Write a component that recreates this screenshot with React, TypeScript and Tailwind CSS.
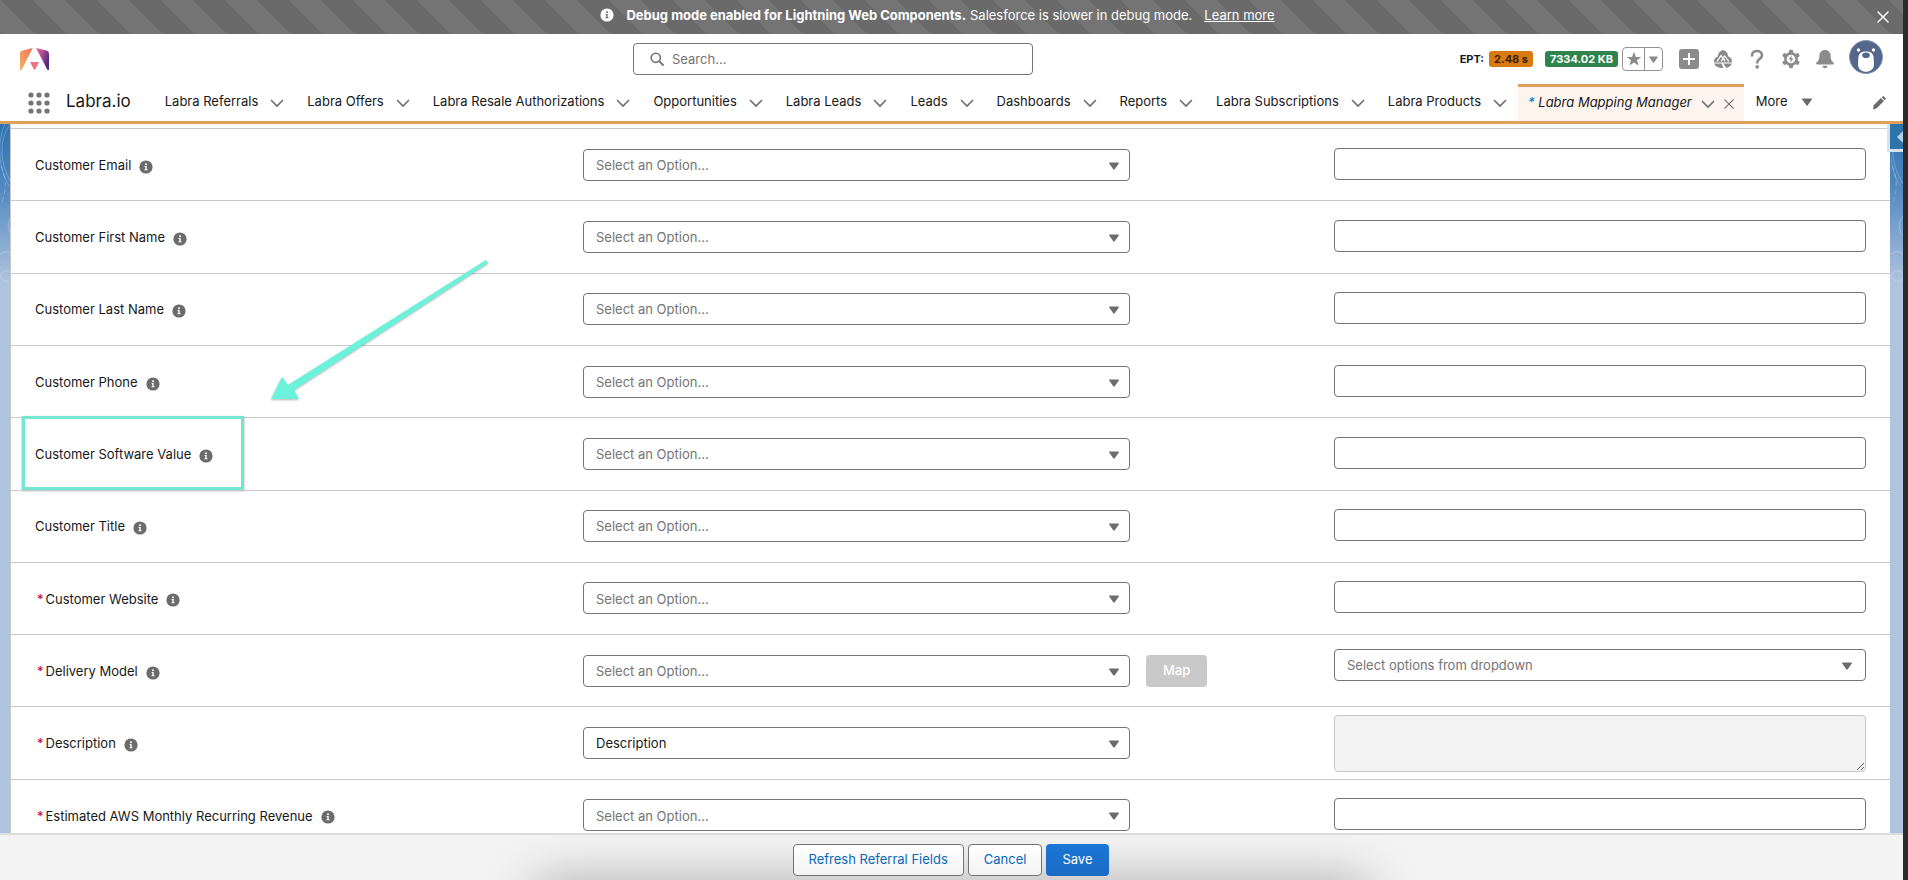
import { useState } from "react";
import type { ReactNode } from "react";

type Field = {
  label: string;
  required?: boolean;
  value?: string;
  mappable?: boolean;
  target?: "text" | "select" | "textarea";
};

const tabs = [
  "Labra Referrals",
  "Labra Offers",
  "Labra Resale Authorizations",
  "Opportunities",
  "Labra Leads",
  "Leads",
  "Dashboards",
  "Reports",
  "Labra Subscriptions",
  "Labra Products",
];

const fields: Field[] = [
  { label: "Customer Email" },
  { label: "Customer First Name" },
  { label: "Customer Last Name" },
  { label: "Customer Phone" },
  { label: "Customer Software Value" },
  { label: "Customer Title" },
  { label: "Customer Website", required: true },
  { label: "Delivery Model", required: true, mappable: true, target: "select" },
  {
    label: "Description",
    required: true,
    value: "Description",
    target: "textarea",
  },
  { label: "Estimated AWS Monthly Recurring Revenue", required: true },
];

const ChevronIcon = () => (
  <svg viewBox="0 0 16 16" className="h-4 w-4" fill="none">
    <path
      d="M2.500 5.500 8 11.200l5.500-5.700"
      stroke="#747474"
      strokeWidth="1.7"
      strokeLinecap="round"
      strokeLinejoin="round"
    />
  </svg>
);

const CloseIcon = ({ className }: { className: string }) => (
  <svg viewBox="0 0 12 12" className={className} fill="none">
    <path
      d="M1 1l10 10M11 1l-10 10"
      stroke="currentColor"
      strokeWidth="1.5"
      strokeLinecap="round"
    />
  </svg>
);

const TriangleIcon = ({ className }: { className: string }) => (
  <svg viewBox="0 0 10 8" className={className} fill="currentColor">
    <path d="M.6.500h8.800c.5 0 .7.500.4.900L5.500 7.600c-.3.300-.7.300-1 0L.2 1.400C-.1 1 .1.500.6.500z" />
  </svg>
);

const InfoIcon = ({ className }: { className: string }) => (
  <svg viewBox="0 0 14 14" className={className}>
    <circle cx="7" cy="7" r="6.600" fill="currentColor" />
    <g className="fill-white group-data-[dark=true]:fill-[#6b6b6b]">
      <circle cx="7" cy="4.200" r="1" />
      <path d="M5.600 6h2.100v3.300h.8v.9H5.500v-.9h.8V6.900h-.7z" />
    </g>
  </svg>
);

const LogoIcon = () => (
  <svg viewBox="0 0 29 23" className="h-[23px] w-[29px]">
    <defs>
      <linearGradient id="logoLeft" x1="0" y1="1" x2="1" y2="0">
        <stop offset="0" stopColor="#f6b25c" />
        <stop offset="1" stopColor="#ea7264" />
      </linearGradient>
      <linearGradient id="logoRight" x1="0" y1="0" x2="1" y2="0.500">
        <stop offset="0" stopColor="#ee6d7c" />
        <stop offset="0.500" stopColor="#b04a90" />
        <stop offset="1" stopColor="#4b2a80" />
      </linearGradient>
    </defs>
    <path d="M0 6.200C0 4 .8 3.400 2.600 2.600L12.700 0 1.500 22H0z" fill="url(#logoLeft)" />
    <path
      d="M29 6.200c0-2.200-.8-2.800-2.600-3.600L16 0l11.500 22H29z"
      fill="url(#logoRight)"
    />
    <path d="M10 14h9l-3.800 7.400c-.3.600-1 .6-1.300 0z" fill="#ee7382" />
  </svg>
);

const TrailheadIcon = () => (
  <svg viewBox="0 0 20 20" className="h-5 w-5">
    <path
      d="M1.200 13.600A5 5 0 0 1 1.500 10C2.300 8.800 3.600 8.200 4.600 7.600 5.400 3.600 7.300 1.200 10 1.200s4.600 2.400 5.400 6.400c1 .6 2.300 1.200 3.100 2.400a5 5 0 0 1 .3 3.600z"
      fill="#8b8b8b"
    />
    <path
      d="M4 12.400 8 6.600l1.900 2.600 1.700-2.300 4.200 5.500M8.200 12.400l2.100-3.200 1.900 3.200"
      fill="none"
      stroke="#fff"
      strokeWidth="1.200"
    />
    <path d="M1 14.600h7.600l1.700 4.400c-3.600.4-7.300-.4-9.300-4.400z" fill="#8b8b8b" />
    <path d="M10.300 14.600H19c-.9 2.200-2.800 3.600-5.600 4.300z" fill="#8b8b8b" />
  </svg>
);

const GearIcon = () => (
  <svg viewBox="0 0 20 20" className="h-5 w-5">
    <g fill="#8b8b8b">
      <circle cx="10" cy="10" r="6.900" />
      <rect x="8" y="0.800" width="4" height="18.400" rx="1.200" />
      <rect
        x="8"
        y="0.800"
        width="4"
        height="18.400"
        rx="1.200"
        transform="rotate(60 10 10)"
      />
      <rect
        x="8"
        y="0.800"
        width="4"
        height="18.400"
        rx="1.200"
        transform="rotate(120 10 10)"
      />
    </g>
    <circle cx="10" cy="10" r="4.300" fill="#fff" />
    <path d="M10.800 6 7.700 10.500h2L9.200 14l3.200-4.700h-2.100z" fill="#8b8b8b" />
  </svg>
);

const BellIcon = () => (
  <svg viewBox="0 0 20 20" className="h-5 w-5" fill="#8b8b8b">
    <path d="M10 1c-3.300 0-5.600 2.500-5.600 5.700 0 3.600-.9 5.200-2.800 6.700-.9.700-.5 2.100.7 2.100h15.400c1.200 0 1.600-1.400.7-2.100-1.900-1.500-2.800-3.100-2.800-6.700C15.600 3.500 13.300 1 10 1z" />
    <path d="M7.600 16.800h4.800c0 1.400-1 2.400-2.400 2.400s-2.400-1-2.400-2.400z" />
  </svg>
);

const AvatarIcon = () => (
  <svg viewBox="0 0 34 34" className="h-[34px] w-[34px]">
    <circle cx="17" cy="17" r="16.500" fill="#52678b" stroke="#8b99b3" />
    <path
      d="M17 11.500c-4.300 0-7.400 1.600-7.600 6-.2 4.300-.6 6.300-.2 8.500.5 3.200 3.500 5.800 7.800 5.800s7.300-2.600 7.800-5.800c.4-2.200 0-4.200-.2-8.500-.2-4.400-3.300-6-7.600-6z"
      fill="#fff"
    />
    <ellipse cx="17" cy="15.200" rx="3.800" ry="2.800" fill="#52678b" />
    <circle cx="9.500" cy="10" r="1.700" fill="#fff" />
    <circle cx="24.500" cy="10" r="1.700" fill="#fff" />
  </svg>
);

const PencilIcon = () => (
  <svg viewBox="0 0 14 14" className="h-[14px] w-[14px]" fill="#6b6b6b">
    <path d="M1.700 9.300 8.900 2.100l3 3-7.200 7.200-3.700 1.200z" />
    <path d="M9.700 1.300l.8-.8c.4-.4 1-.4 1.400 0l1.600 1.600c.4.400.4 1 0 1.400l-.8.800z" />
  </svg>
);

const IconButton = ({
  label,
  children,
}: {
  label: string;
  children: ReactNode;
}) => (
  <button
    type="button"
    aria-label={label}
    className="flex w-8 items-center justify-center"
  >
    {children}
  </button>
);

const DebugBanner = ({ onClose }: { onClose: () => void }) => (
  <div className="flex h-[34px] items-center bg-[linear-gradient(45deg,#6a6a6a_25%,#747474_25%,#747474_50%,#6a6a6a_50%,#6a6a6a_75%,#747474_75%)] bg-[length:64px_64px] px-[14px] text-[13px] leading-5 text-white">
    <div
      data-dark="true"
      className="group flex flex-1 items-center justify-center pr-4 pb-1"
    >
      <InfoIcon className="mr-3 h-[14px] w-[14px]" />
      <strong className="mr-1 font-bold">
        Debug mode enabled for Lightning Web Components.
      </strong>
      <span className="mr-3">Salesforce is slower in debug mode.</span>
      <a href="#learn-more" className="underline">
        Learn more
      </a>
    </div>
    <button type="button" aria-label="Close" onClick={onClose}>
      <CloseIcon className="h-3 w-3" />
    </button>
  </div>
);

const GlobalHeader = () => (
  <header className="grid h-[50px] grid-cols-[613fr_400px_850fr] items-center bg-white px-5">
    <LogoIcon />
    <label className="flex h-8 items-center rounded border border-[#747474] bg-white pl-4">
      <svg viewBox="0 0 14 14" className="mr-2 h-[14px] w-[14px]" fill="none">
        <circle cx="5.800" cy="5.800" r="4.600" stroke="#747474" strokeWidth="1.600" />
        <path
          d="M9.200 9.200l3.800 3.800"
          stroke="#747474"
          strokeWidth="1.800"
          strokeLinecap="round"
        />
      </svg>
      <input
        type="search"
        aria-label="Search"
        placeholder="Search..."
        className="min-w-0 flex-1 pt-[2px] text-[13px] outline-none placeholder:text-[#747474]"
      />
    </label>
    <div className="flex items-center justify-end">
      <span className="mr-[5px] text-[11px] font-bold text-[#181818]">EPT:</span>
      <span className="mr-3 rounded-[3px] bg-[#d87a10] px-[5px] text-[11px] leading-4 font-bold text-[#3a1d08]">
        2.48 s
      </span>
      <span className="mr-1 rounded-[3px] bg-[#2e844a] px-[5px] text-[11px] leading-4 font-bold text-white">
        7334.02 KB
      </span>
      <div className="mr-[10px] flex h-6 w-[41px] rounded border border-[#939393] text-[#8b8b8b]">
        <button
          type="button"
          aria-label="Favorite"
          className="flex flex-1 items-center justify-center border-r border-[#939393]"
        >
          <svg viewBox="0 0 16 16" className="h-4 w-4" fill="currentColor">
            <path d="M8 .8l1.900 5.100h5.300l-4.200 3.300 1.500 5.300L8 11.400l-4.500 3.100L5 9.200.8 5.900h5.300z" />
          </svg>
        </button>
        <button
          type="button"
          aria-label="Favorites list"
          className="flex w-[17px] items-center justify-center"
        >
          <TriangleIcon className="h-[7px] w-[9px]" />
        </button>
      </div>
      <div className="mr-2 flex gap-x-[2px]">
        <IconButton label="Quick create">
          <svg viewBox="0 0 20 20" className="h-5 w-5">
            <rect width="20" height="20" rx="3" fill="#8b8b8b" />
            <path d="M10 4v12M4 10h12" stroke="#fff" strokeWidth="2" />
          </svg>
        </IconButton>
        <IconButton label="Guidance center">
          <TrailheadIcon />
        </IconButton>
        <IconButton label="Help">
          <svg viewBox="0 0 14 20" className="h-5 w-[14px]" fill="none">
            <path
              d="M2 6.400C2 3.600 4.200 2 7 2s5 1.700 5 4.400c0 3.400-4.700 3.500-4.700 7"
              stroke="#8b8b8b"
              strokeWidth="2.600"
              strokeLinecap="round"
            />
            <circle cx="7.200" cy="17.900" r="1.800" fill="#8b8b8b" />
          </svg>
        </IconButton>
        <IconButton label="Setup">
          <GearIcon />
        </IconButton>
        <IconButton label="Notifications">
          <BellIcon />
        </IconButton>
      </div>
      <button type="button" aria-label="View profile" className="pb-1">
        <AvatarIcon />
      </button>
    </div>
  </header>
);

const NavBar = () => (
  <nav className="flex h-10 items-stretch border-b-[3px] border-[#e0a05c] bg-white text-[13px] text-[#181818]">
    <button type="button" aria-label="App launcher" className="ml-7 shrink-0">
      <svg viewBox="0 0 22 22" className="h-[22px] w-[22px]" fill="#747474">
        {[3, 11, 19].map((y) =>
          [3, 11, 19].map((x) => (
            <circle key={`${x}-${y}`} cx={x} cy={y} r="2.600" />
          ))
        )}
      </svg>
    </button>
    <span className="mr-[22px] ml-4 flex items-center pb-[2px] text-[17px]">
      Labra.io
    </span>
    {tabs.map((tab) => (
      <div key={tab} className="flex items-center pr-[10px] pl-3">
        <a href="#tab" className="pb-[2px] whitespace-nowrap">
          {tab}
        </a>
        <button type="button" aria-label={`${tab} list`} className="ml-[11px]">
          <ChevronIcon />
        </button>
      </div>
    ))}
    <div className="flex items-center border-t-[3px] border-[#e0a05c] bg-[#fef4ee] pr-[10px] pl-[10px]">
      <a href="#tab" className="pb-[2px] whitespace-nowrap italic">
        <span className="text-[#0070d2]">*</span> Labra Mapping Manager
      </a>
      <button
        type="button"
        aria-label="Labra Mapping Manager actions"
        className="ml-2"
      >
        <ChevronIcon />
      </button>
      <button
        type="button"
        aria-label="Close Labra Mapping Manager"
        className="ml-2 text-[#747474]"
      >
        <CloseIcon className="h-[10px] w-[10px]" />
      </button>
    </div>
    <button type="button" className="flex items-center pb-[2px] pl-3">
      More
      <TriangleIcon className="ml-[14px] h-2 w-[10px] text-[#6b6b6b]" />
    </button>
    <button type="button" aria-label="Edit tabs" className="mr-[17px] ml-auto">
      <PencilIcon />
    </button>
  </nav>
);

const SelectBox = ({
  id,
  label,
  placeholder,
  value,
  arrowClass = "right-[11px]",
}: {
  id?: string;
  label?: string;
  placeholder: string;
  value?: string;
  arrowClass?: string;
}) => (
  <div className="relative">
    <select
      id={id}
      aria-label={label}
      defaultValue={value ?? ""}
      className={`h-8 w-full appearance-none rounded border border-[#747474] bg-white px-3 pt-[2px] text-[13px] ${
        value ? "text-[#181818]" : "text-[#747474]"
      }`}
    >
      <option value="">{placeholder}</option>
      {value && <option value={value}>{value}</option>}
    </select>
    <TriangleIcon
      className={`pointer-events-none absolute top-[13px] h-2 w-[10px] text-[#6b6b6b] ${arrowClass}`}
    />
  </div>
);

const TargetControl = ({ field }: { field: Field }) => {
  const label = `${field.label} default value`;
  if (field.target === "select") {
    return (
      <div className="pb-3">
        <SelectBox
          label={label}
          placeholder="Select options from dropdown"
          arrowClass="right-[14px]"
        />
      </div>
    );
  }
  if (field.target === "textarea") {
    return (
      <textarea
        aria-label={label}
        disabled
        className="block h-[57px] w-full rounded border border-[#c9c9c9] bg-[#f3f3f3]"
      />
    );
  }
  return (
    <div className="pb-[2px]">
      <input
        type="text"
        aria-label={label}
        className="block h-8 w-full rounded border border-[#747474] bg-white px-3 text-[13px]"
      />
    </div>
  );
};

// Teal callout drawn over the highlighted field
const Callout = () => (
  <>
    <div className="pointer-events-none absolute -top-[2px] left-[11px] h-[74px] w-[222px] border-[3px] border-[#74e6d2] shadow-[0_1px_2px_rgba(0,0,0,0.35)]" />
    <svg
      viewBox="0 0 220 145"
      className="pointer-events-none absolute -top-[160px] left-[258px] h-[145px] w-[220px] drop-shadow-[0_1px_1px_rgba(0,0,0,0.3)]"
      fill="#6af2db"
    >
      <path d="M217 2l2 3L25 132l5 9H2l11-22 6 8z" />
    </svg>
  </>
);

const FieldRow = ({ field }: { field: Field }) => {
  const id = field.label.toLowerCase().replace(/ /g, "-");

  return (
    <div className="relative grid grid-cols-[548fr_547fr_204fr_532fr] items-center border-t border-[#c9c9c9] px-6">
      <div className="flex items-center pt-[2px] text-[13px] text-[#181818]">
        {field.required && (
          <span className="mr-[2px] ml-[2px] text-[#ba0517]">*</span>
        )}
        <label htmlFor={id}>{field.label}</label>
        <InfoIcon className="mt-[2px] ml-2 h-[14px] w-[14px] text-[#6b6b6b]" />
      </div>
      <SelectBox
        id={id}
        placeholder="Select an Option..."
        value={field.value}
      />
      <div className="pl-4">
        {field.mappable && (
          <button
            type="button"
            disabled
            className="block h-8 rounded bg-[#c9c9c9] px-[17px] text-[13px] font-medium text-white"
          >
            Map
          </button>
        )}
      </div>
      <TargetControl field={field} />
      {field.label === "Customer Software Value" && <Callout />}
    </div>
  );
};

// Contour lines that show through at both page edges
const EdgePattern = ({ className }: { className: string }) => (
  <svg
    viewBox="0 0 12 180"
    className={`pointer-events-none absolute top-0 h-[180px] w-3 ${className}`}
    fill="none"
    stroke="#fff"
    strokeOpacity="0.25"
  >
    <path d="M10 0C-2 18 0 40 12 60" />
    <path d="M5 0C-4 20-1 44 9 62" />
    <path d="M1 42c5 12 6 22 1 36" strokeDasharray="5 3" />
    <path d="M12 92c-5 5-5 14 0 20M0 130c6-4 12-2 12 2M0 152c4-8 12-6 12 0s-8 8-12 0" />
  </svg>
);

const FooterBar = () => (
  <footer className="relative flex h-[47px] items-center justify-center gap-1 overflow-hidden border-t-2 border-[#dcdcdc] bg-[#f3f3f3] pt-1 pr-[2px] text-[13px]">
    <div className="absolute -bottom-10 left-1/2 h-10 w-[840px] -translate-x-1/2 rounded-full bg-black/30 blur-xl" />
    <button
      type="button"
      className="relative h-8 rounded border border-[#747474] bg-linear-to-b from-white to-[#f3f3f3] px-[15px] text-[#0b68b8]"
    >
      Refresh Referral Fields
    </button>
    <button
      type="button"
      className="relative h-8 rounded border border-[#747474] bg-linear-to-b from-white to-[#f3f3f3] px-[15px] text-[#0b68b8]"
    >
      Cancel
    </button>
    <button
      type="button"
      className="relative h-8 rounded bg-linear-to-b from-[#1b76d6] to-[#1a6bc2] px-4 text-white"
    >
      Save
    </button>
  </footer>
);

const App = () => {
  const [showBanner, setShowBanner] = useState(true);

  return (
    <div className="flex h-screen bg-[#2b2b2b] pr-[5px] font-['Inter',sans-serif]">
      <div className="flex min-w-0 flex-1 flex-col">
        {showBanner && <DebugBanner onClose={() => setShowBanner(false)} />}
        <GlobalHeader />
        <NavBar />
        <main className="relative min-h-0 flex-1 overflow-hidden bg-[#b0c4df] bg-[linear-gradient(to_bottom,#2f73b0_0,#4f86bf_60px,#b0c4df_160px)] pr-[13px] pl-[10px]">
          <EdgePattern className="left-0" />
          <EdgePattern className="right-0" />
          <div className="relative h-full overflow-hidden border-l border-[#c9c9c9] bg-white pt-1">
            <div className="grid min-h-[723px] auto-rows-fr">
              {fields.map((field) => (
                <FieldRow key={field.label} field={field} />
              ))}
            </div>
          </div>
          <button
            type="button"
            aria-label="Open panel"
            className="absolute top-0 right-0 flex h-7 w-4 items-center justify-end border-b-3 border-l-3 border-[#d5e3ef] bg-[#2f74a8]"
          >
            <svg viewBox="0 0 6 12" className="h-3 w-[6px]" fill="#b7cfe4">
              <path d="M6 0v12L0 6z" />
            </svg>
          </button>
        </main>
        <FooterBar />
      </div>
    </div>
  );
};

export default App;
